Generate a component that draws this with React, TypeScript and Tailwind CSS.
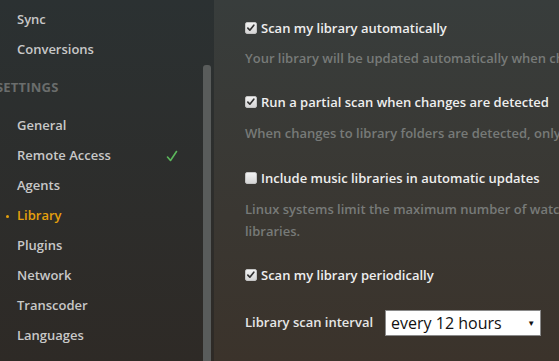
import React from "react";

const font = { fontFamily: '"Open Sans", "Liberation Sans", sans-serif' };

function Box({ checked }: { checked: boolean }) {
  return (
    <span className="relative inline-block h-[12px] w-[12px] shrink-0 rounded-[2px] border border-[#c4c4c4] bg-gradient-to-b from-[#f2f2f2] to-[#d6d6d6]">
      {checked && (
        <svg viewBox="0 0 12 12" className="absolute left-0 top-0 h-[10px] w-[10px]">
          <path d="M2.2 6.2 L4.6 8.6 L9.4 2.6" fill="none" stroke="#333" strokeWidth="2" strokeLinecap="round" strokeLinejoin="round" />
        </svg>
      )}
    </span>
  );
}

function Check({ label, checked, className }: { label: string; checked: boolean; className: string }) {
  return (
    <div className={`flex h-[20px] items-center gap-[4px] ${className}`}>
      <Box checked={checked} />
      <span className="text-[13px] font-semibold leading-[20px] text-[#eeeeee]">{label}</span>
    </div>
  );
}

function Desc({ children, className }: { children: React.ReactNode; className: string }) {
  return (
    <div className={`whitespace-nowrap text-[13px] font-semibold leading-[22px] text-[#777a78] ${className}`}>{children}</div>
  );
}

function NavItem({ label, active, check }: { label: string; active?: boolean; check?: boolean }) {
  return (
    <div className="relative flex h-[30px] items-center pl-[17px] pr-[36px]">
      {active && <span className="absolute left-[6px] top-[14px] h-[3px] w-[3px] rounded-full bg-[#e5a00d]" />}
      <span className={`text-[13px] font-semibold ${active ? "text-[#e5a00d]" : "text-[#c8c8c8]"}`}>{label}</span>
      {check && (
        <svg viewBox="0 0 12 12" className="ml-auto h-[12px] w-[12px]">
          <path d="M1.5 7 L4.5 10.5 L10.5 1.5" fill="none" stroke="#5cb85c" strokeWidth="1.6" strokeLinecap="round" strokeLinejoin="round" />
        </svg>
      )}
    </div>
  );
}

export default function App() {
  return (
    <div style={font} className="flex h-[361px] w-[559px] overflow-hidden">
      <aside className="relative h-full w-[214px] shrink-0 bg-gradient-to-b from-[#2b3132] to-[#2e2a26] pt-[5px]">
        <NavItem label="Sync" />
        <NavItem label="Conversions" />
        <div className="mt-[8px] flex h-[30px] items-center pl-0">
          <span className="-ml-[4px] text-[13px] font-bold uppercase tracking-[0.2px] text-[#6a6d6c]">Settings</span>
        </div>
        <div className="mt-[8px]">
          <NavItem label="General" />
          <NavItem label="Remote Access" check />
          <NavItem label="Agents" />
          <NavItem label="Library" active />
          <NavItem label="Plugins" />
          <NavItem label="Network" />
          <NavItem label="Transcoder" />
          <NavItem label="Languages" />
        </div>
        <div className="absolute bottom-0 left-[203px] top-[65px] w-[8px] rounded-t-[3px] bg-[#595c5b]" />
      </aside>
      <main className="flex h-full min-w-0 flex-1 flex-col overflow-hidden bg-gradient-to-b from-[#383d3c] to-[#3b332b] pl-[31px] pt-[18px]">
        <Check label="Scan my library automatically" checked className="" />
        <Desc className="mt-[9px]">Your library will be updated automatically when changes to library folders are detected.</Desc>
        <Check label="Run a partial scan when changes are detected" checked className="mt-[23px]" />
        <Desc className="mt-[10px]">When changes to library folders are detected, only scan the folder that changed.</Desc>
        <Check label="Include music libraries in automatic updates" checked={false} className="mt-[24px]" />
        <Desc className="mt-[10px]">
          Linux systems limit the maximum number of watched directories; this may cause problems with large music
          <br />
          libraries.
        </Desc>
        <Check label="Scan my library periodically" checked className="mt-[23px]" />
        <div className="mt-[25px] flex items-center gap-[12px]">
          <span className="text-[13px] font-semibold text-[#e6e6e6]">Library scan interval</span>
          <div className="flex h-[26px] w-[156px] shrink-0 items-center border border-[#8a8a8a] bg-white pl-[5px] pr-[5px]">
            <span className="text-[16px] leading-[20px] text-[#111]">every 12 hours</span>
            <span className="ml-auto text-[8px] text-[#111]">▼</span>
          </div>
        </div>
      </main>
    </div>
  );
}
